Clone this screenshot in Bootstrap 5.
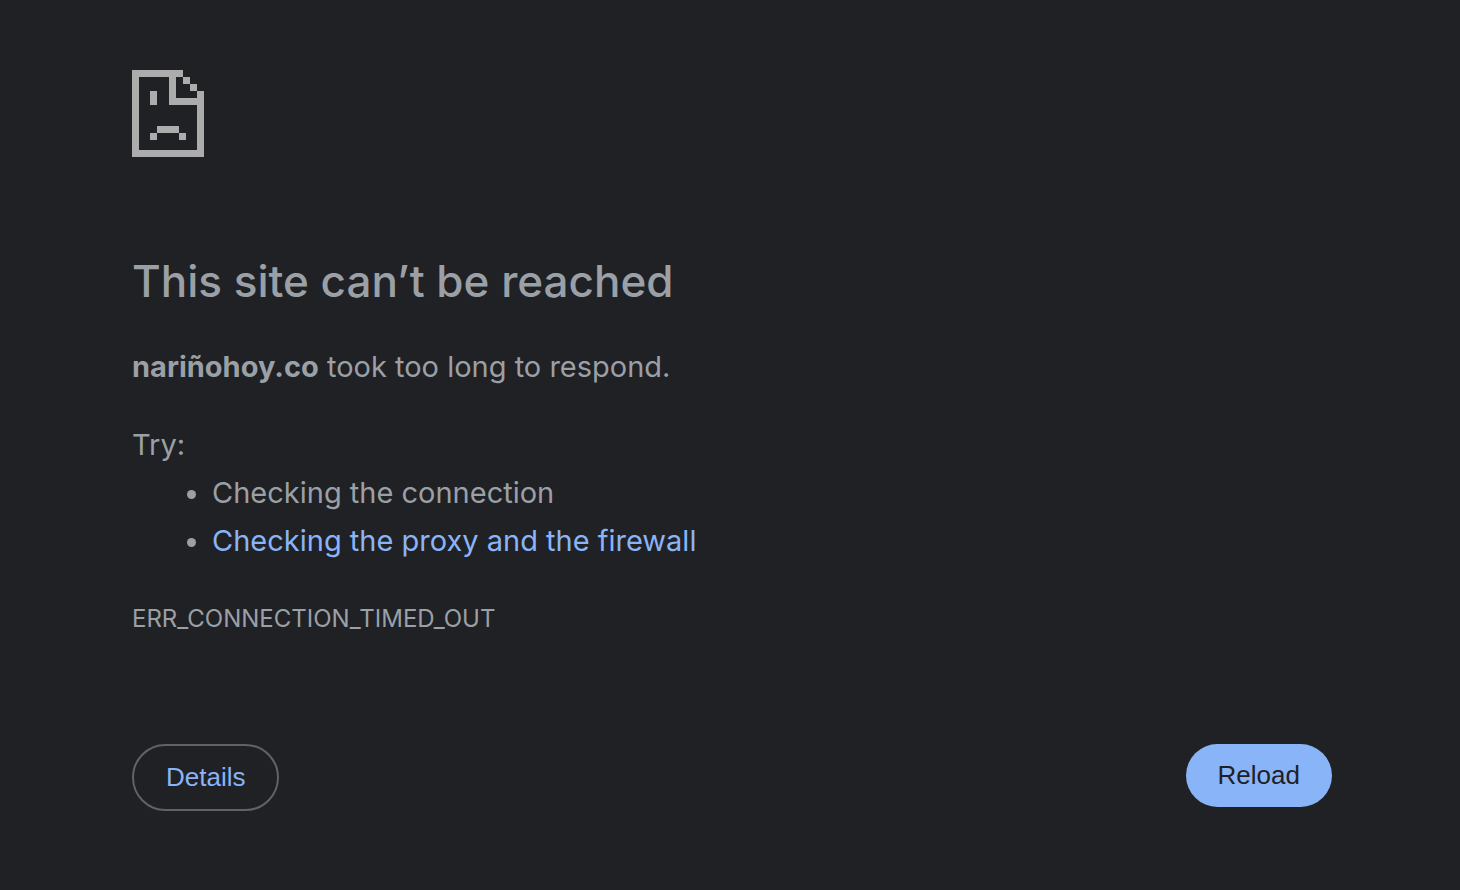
<!DOCTYPE html>
<html lang="en">
<head>
<meta charset="utf-8">
<meta name="viewport" content="width=device-width, initial-scale=1">
<title>nariñohoy.co</title>
<link href="https://cdn.jsdelivr.net/npm/bootstrap@5.3.0/dist/css/bootstrap.min.css" rel="stylesheet">
<style>
  body { background: #202124; color: #9aa0a6; font-family: Inter, sans-serif; font-size: 29px; line-height: 48px; }
  .error-page { padding: 70px 128px 48px 132px; }
  .error-icon { width: 72px; height: 87px; fill: #acacac; margin-bottom: 95px; }
  h1 { font-size: 44px; line-height: 58px; font-weight: 500; margin-bottom: 33px; }
  .summary, .tips { margin-bottom: 30px; }
  .tips { padding-left: 80px; }
  .error-page a { color: #8ab4f8; }
  .error-code { font-size: 24px; margin-bottom: 101px; }
  .pill { --bs-btn-font-family: "Liberation Sans", Arial, sans-serif; --bs-btn-font-size: 26px; --bs-btn-line-height: 31px; --bs-btn-padding-x: 32px; --bs-btn-padding-y: 16px; --bs-btn-font-weight: 400; }
  .pill-outline { --bs-btn-color: #8ab4f8; --bs-btn-border-width: 2px; --bs-btn-border-color: #5f6368; --bs-btn-hover-color: #8ab4f8; --bs-btn-hover-border-color: #8ab4f8; }
  .pill-solid { --bs-btn-color: #202124; --bs-btn-bg: #8ab4f8; --bs-btn-border-width: 0; --bs-btn-hover-color: #202124; --bs-btn-hover-bg: #aecbfa; }
</style>
</head>
<body>
<main class="error-page">
  <svg class="error-icon d-block" viewBox="0 0 72 87" shape-rendering="crispEdges" aria-hidden="true">
    <path d="M0 0H51V7H44V28H65V21H72V87H0ZM7 7V80H65V35H37V7Z" fill-rule="evenodd"/>
    <path d="M51 7h7v7h-7zM58 14h7v7h-7zM18 21h7v14h-7zM25 56h22v7h-22zM18 63h7v7h-7zM47 63h7v7h-7z"/>
  </svg>
  <h1>This site can’t be reached</h1>
  <p class="summary"><strong>nariñohoy.co</strong> took too long to respond.</p>
  <p class="mb-0">Try:</p>
  <ul class="tips">
    <li>Checking the connection</li>
    <li><a class="text-decoration-none" href="#buttons">Checking the proxy and the firewall</a></li>
  </ul>
  <p class="error-code">ERR_CONNECTION_TIMED_OUT</p>
  <div id="buttons" class="d-flex flex-wrap gap-3 justify-content-between align-items-start">
    <button type="button" class="btn rounded-pill pill pill-outline">Details</button>
    <button type="button" class="btn rounded-pill pill pill-solid">Reload</button>
  </div>
</main>
<script src="https://cdn.jsdelivr.net/npm/bootstrap@5.3.0/dist/js/bootstrap.bundle.min.js"></script>
</body>
</html>
